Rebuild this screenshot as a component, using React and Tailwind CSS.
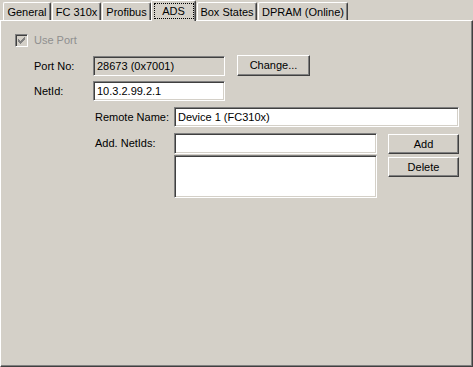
import React from 'react';

const sunken =
  'border border-t-[#808080] border-l-[#808080] border-r-white border-b-white shadow-[inset_1px_1px_0_#404040,inset_-1px_-1px_0_#d4d0c8]';
const raised =
  'border border-t-white border-l-white border-r-[#404040] border-b-[#404040] shadow-[inset_-1px_-1px_0_#808080]';

function Tab({ label, w, selected, first }) {
  if (selected) {
    return (
      <div
        className={`relative z-10 -mb-px h-[21px] flex items-start justify-center pt-[2px] bg-[#d4d0c8] border-t border-l border-white border-r border-r-[#404040] rounded-t-[2px] shadow-[inset_-1px_0_0_#808080] ${w}`}
      >
        <span className="w-[40px] h-[16px] flex items-center justify-center border border-dotted border-black">{label}</span>
      </div>
    );
  }
  return (
    <div
      className={`h-[18px] flex items-center justify-center pt-px border-t border-l border-white border-r border-r-[#404040] rounded-t-[2px] shadow-[inset_-1px_0_0_#808080] ${first ? '' : 'ml-px'} ${w}`}
    >
      {label}
    </div>
  );
}

export default function App() {
  return (
    <div className="w-[473px] h-[367px] bg-[#d4d0c8] overflow-hidden font-['Liberation_Sans',Arial,sans-serif] text-[11px] text-black">
      {/* Tab strip */}
      <div className="flex items-end h-[20px] pl-[3px]">
        <Tab label="General" w="w-[48px]" first />
        <Tab label="FC 310x" w="w-[49px]" />
        <Tab label="Profibus" w="w-[49px]" />
        <Tab label="ADS" w="w-[45px]" selected />
        <Tab label="Box States" w="w-[60px]" />
        <Tab label="DPRAM (Online)" w="w-[90px]" />
      </div>

      {/* Page */}
      <div className="h-[347px] border border-t-white border-l-white border-r-[#404040] border-b-[#404040] shadow-[inset_-1px_-1px_0_#808080] pl-[14px] pt-[13px]">
        {/* Use Port */}
        <div className="flex items-center h-[13px] gap-[6px]">
          <div className={`w-[13px] h-[13px] flex items-center justify-center bg-[#d4d0c8] ${sunken}`}>
            <svg width="7" height="7" viewBox="0 0 7 7" shapeRendering="crispEdges">
              <path
                fill="#808080"
                d="M6 0h1v1h-1z M5 1h2v1h-2z M0 2h1v1h-1z M4 2h3v1h-3z M0 3h2v1h-2z M3 3h3v1h-3z M0 4h5v1h-5z M1 5h3v1h-3z M2 6h1v1h-1z"
              />
            </svg>
          </div>
          <span className="text-[#8f8f8f]">Use Port</span>
        </div>

        {/* Port No */}
        <div className="mt-[8px] flex items-start">
          <div className="ml-[19px] w-[59px] h-[20px] mt-px flex items-center">Port No:</div>
          <div className={`w-[132px] h-[20px] mt-px flex items-center pl-[3px] bg-[#d4d0c8] ${sunken}`}>28673 (0x7001)</div>
          <button className={`ml-[12px] w-[73px] h-[21px] flex items-center justify-center bg-[#d4d0c8] ${raised}`}>
            Change...
          </button>
        </div>

        {/* NetId */}
        <div className="mt-[5px] flex items-start">
          <div className="ml-[19px] w-[59px] h-[20px] flex items-center">NetId:</div>
          <div className={`w-[132px] h-[20px] flex items-center pl-[3px] bg-white ${sunken}`}>10.3.2.99.2.1</div>
        </div>

        {/* Remote Name */}
        <div className="mt-[6px] flex items-start">
          <div className="ml-[80px] w-[79px] h-[20px] flex items-center">Remote Name:</div>
          <div className={`w-[285px] h-[20px] flex items-center pl-[3px] bg-white ${sunken}`}>Device 1 (FC310x)</div>
        </div>

        {/* Add. NetIds */}
        <div className="mt-[6px] flex items-start">
          <div className="ml-[80px] w-[79px] h-[20px] flex items-center">Add. NetIds:</div>
          <div className="flex flex-col w-[203px]">
            <div className={`h-[21px] bg-white ${sunken}`}></div>
            <div className={`mt-px h-[43px] bg-white ${sunken}`}></div>
          </div>
          <div className="ml-[11px] flex flex-col w-[71px]">
            <button className={`mt-px h-[20px] flex items-center justify-center bg-[#d4d0c8] ${raised}`}>Add</button>
            <button className={`mt-[3px] h-[20px] flex items-center justify-center bg-[#d4d0c8] ${raised}`}>Delete</button>
          </div>
        </div>
      </div>
    </div>
  );
}
